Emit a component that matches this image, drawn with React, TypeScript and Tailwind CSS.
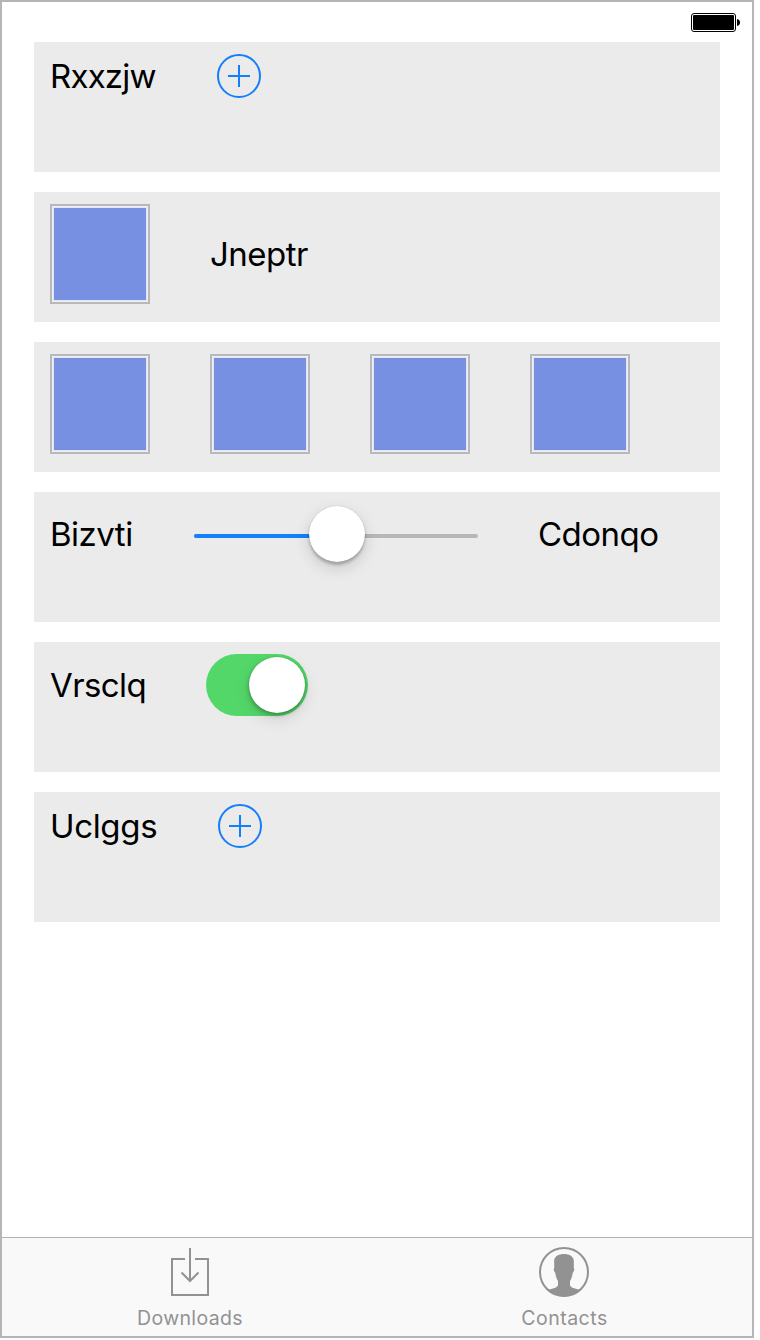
import type { ReactNode } from "react";

function Panel({ children }: { children: ReactNode }) {
  return <section className="flex h-[130px] items-start bg-[#ebebeb] pt-3 pl-4">{children}</section>;
}

function Label({ children, className }: { children: string; className: string }) {
  return (
    <span className={`block shrink-0 whitespace-nowrap text-[33px] leading-[44px] text-black ${className}`}>
      {children}
    </span>
  );
}

function AddButton() {
  return (
    <button type="button" aria-label="Add" className="size-11 shrink-0">
      <svg viewBox="0 0 44 44" className="size-11" fill="none" stroke="#147efb" strokeWidth="2">
        <circle cx="22" cy="22" r="21" />
        <path d="M11 22H33M22 11V33" />
      </svg>
    </button>
  );
}

function Tile() {
  return (
    <div className="size-[100px] shrink-0 border-2 border-[#b8b8b8] bg-[#f0f1f6] p-px">
      <div className="size-full border border-[#dfe4f6] bg-[#7790e2]" />
    </div>
  );
}

function Slider() {
  return (
    <div className="relative mt-[30px] flex h-1 w-[284px] shrink-0 overflow-visible rounded-full bg-[#b7b7b7]">
      <div className="h-1 w-[143px] rounded-l-full bg-[#147efb]" />
      <div className="absolute -top-7 left-[115px] size-14 rounded-full bg-white shadow-[0_0_1px_rgba(0,0,0,0.25),0_3px_3px_rgba(0,0,0,0.22),0_6px_16px_rgba(0,0,0,0.15)]" />
    </div>
  );
}

function Switch() {
  return (
    <div className="flex h-[62px] w-[102px] shrink-0 items-center justify-end rounded-full bg-[#53d769] pr-[3px]">
      <div className="size-14 rounded-full bg-white shadow-[0_0_1px_rgba(0,0,0,0.2),0_2px_4px_rgba(0,0,0,0.3),0_6px_16px_rgba(0,0,0,0.12)]" />
    </div>
  );
}

function DownloadsIcon() {
  return (
    <svg viewBox="0 0 40 50" className="h-[50px] w-10" fill="none" stroke="#929292" strokeWidth="2">
      <path d="M15 12H2V48H38V12H25" />
      <path d="M20 1V34M11.5 25.5L20 34L28.5 25.5" />
    </svg>
  );
}

function ContactsIcon() {
  return (
    <svg viewBox="0 0 50 50" className="-ml-px size-[50px]" fill="#929292">
      <circle cx="25" cy="25" r="24" fill="none" stroke="#929292" strokeWidth="2" />
      <path d="M15.2 13C16 9 20 7 25 7C30 7 34 9 34.8 13V21C35.8 21.5 35 25 33.8 25.5C33.3 29 32.5 32 31 34V38C31.5 41 36 41.3 42 43C33 51.5 17 51.5 8 43C14 41.3 18.5 41 19 38V34C17.5 32 16.7 29 16.2 25.5C15 25 14.2 21.5 15.2 21Z" />
    </svg>
  );
}

export default function App() {
  return (
    <div className="h-[1340px] w-[760px] bg-white font-['Inter',sans-serif]">
      <div className="flex h-[1338px] w-[754px] flex-col border-2 border-[#b5b5b5] bg-white">
        <header className="flex h-10 shrink-0 items-center justify-end pr-3">
          <svg viewBox="0 0 49 19" className="h-[19px] w-[49px]">
            <rect x="0.5" y="0.5" width="44" height="18" rx="2.5" fill="none" stroke="#000" />
            <rect x="2" y="2" width="41" height="15" rx="1" />
            <path d="M46 6C48.2 6.5 49 7.5 49 9.5C49 11.5 48.2 12.5 46 13Z" />
          </svg>
        </header>

        <main className="flex flex-1 flex-col gap-5 px-8">
          <Panel>
            <Label className="w-[167px] tracking-[-0.8px]">Rxxzjw</Label>
            <AddButton />
          </Panel>
          <Panel>
            <Tile />
            <Label className="ml-[60px] pt-7 tracking-[-0.5px]">Jneptr</Label>
          </Panel>
          <Panel>
            <div className="flex gap-[60px]">
              <Tile />
              <Tile />
              <Tile />
              <Tile />
            </div>
          </Panel>
          <Panel>
            <Label className="w-36 pt-2 tracking-[-0.5px]">Bizvti</Label>
            <Slider />
            <Label className="ml-[60px] pt-2 tracking-[-0.5px]">Cdonqo</Label>
          </Panel>
          <Panel>
            <Label className="w-[156px] pt-[9px] tracking-[-0.6px]">Vrsclq</Label>
            <Switch />
          </Panel>
          <Panel>
            <Label className="w-[168px] tracking-[-0.35px]">Uclggs</Label>
            <AddButton />
          </Panel>
        </main>

        <nav className="grid h-[99px] shrink-0 grid-cols-2 border-t border-[#b2b2b2] bg-[#f9f9f9] text-[19.5px] leading-6 text-[#929292]">
          <div className="flex flex-col items-center pt-[9px]">
            <DownloadsIcon />
            <span className="mt-[9px] pl-px tracking-[0.35px]">Downloads</span>
          </div>
          <div className="flex flex-col items-center pt-[9px]">
            <ContactsIcon />
            <span className="mt-[9px] tracking-[0.5px]">Contacts</span>
          </div>
        </nav>
      </div>
    </div>
  );
}
